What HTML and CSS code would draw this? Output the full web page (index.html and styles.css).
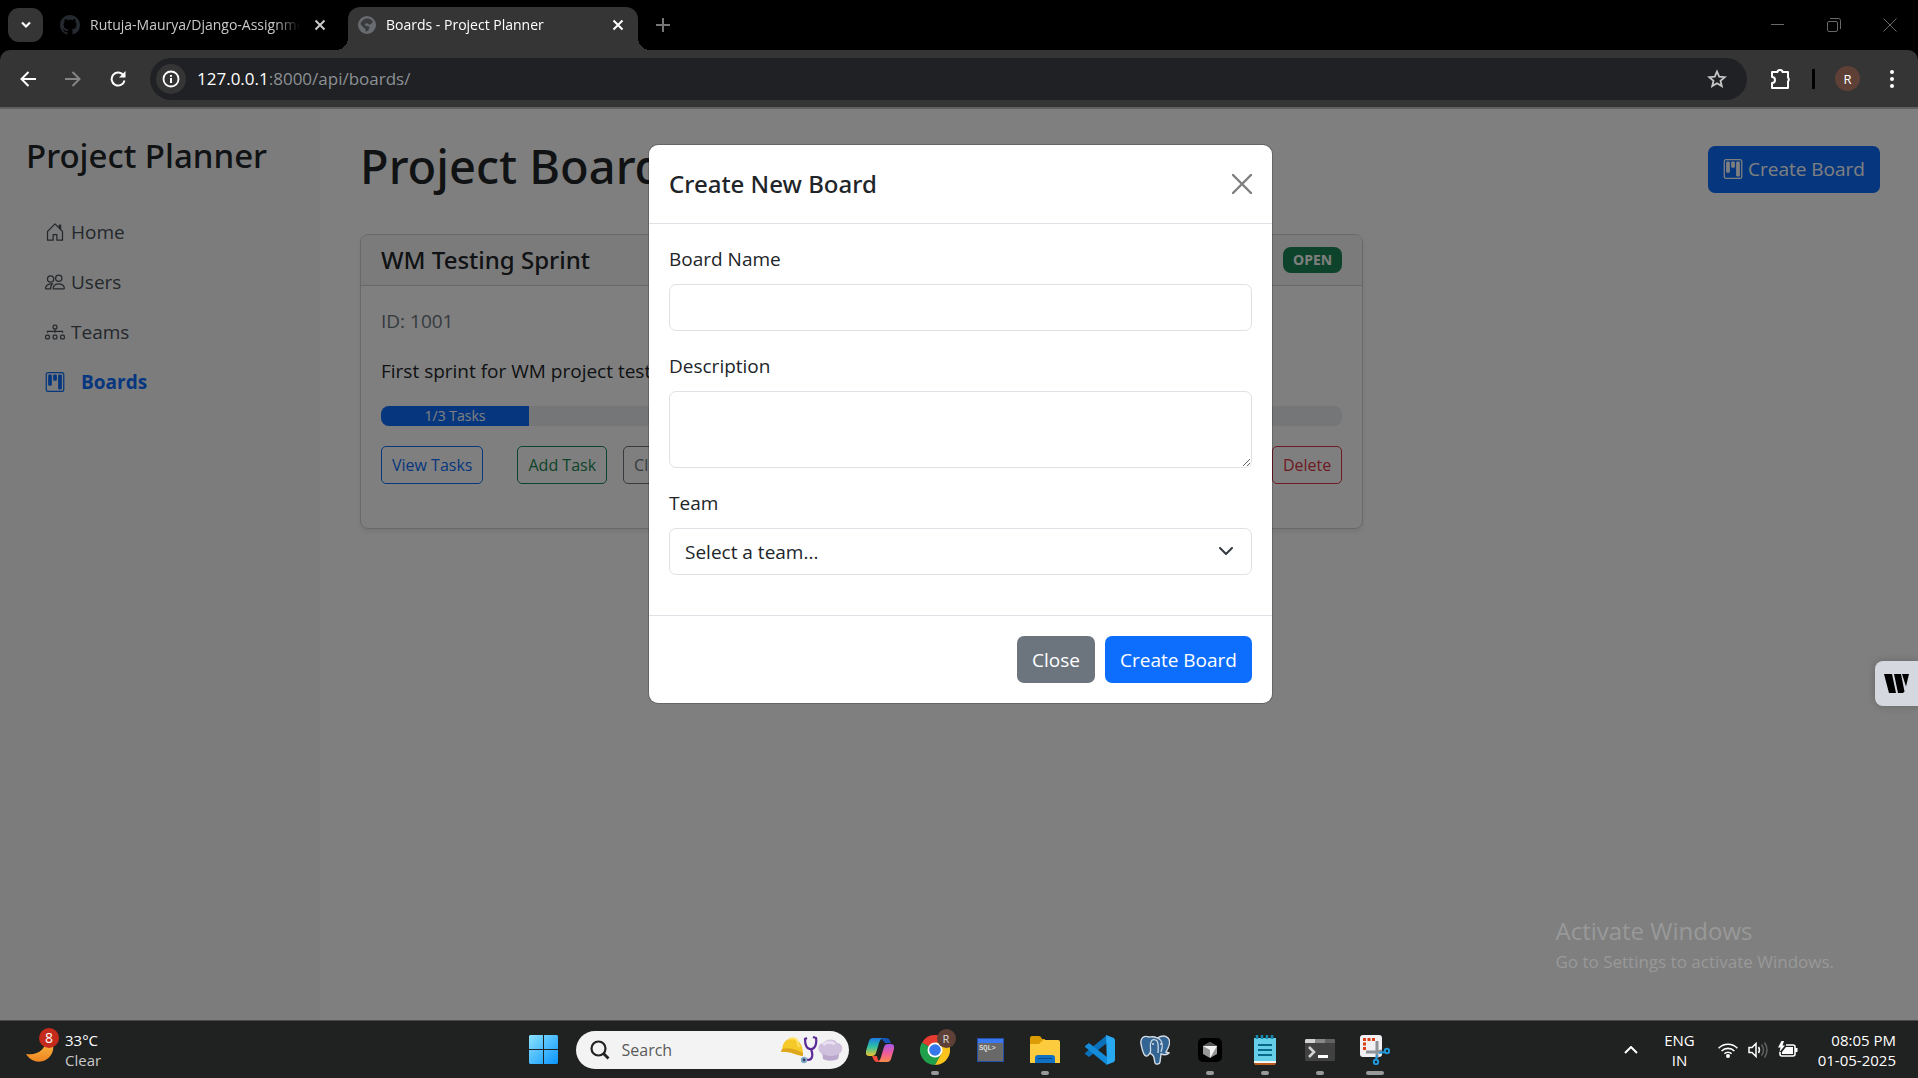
FILE: index.html
```html
<!DOCTYPE html>
<html lang="en">
<head>
<meta charset="utf-8">
<meta name="viewport" content="width=device-width, initial-scale=1">
<title>Boards - Project Planner</title>
<link rel="stylesheet" href="styles.css">
</head>
<body>
<svg class="defs" aria-hidden="true">
  <symbol id="kanban" viewBox="0 0 16 16">
    <path d="M13.5 1a1 1 0 0 1 1 1v12a1 1 0 0 1-1 1h-11a1 1 0 0 1-1-1V2a1 1 0 0 1 1-1zm-11-1a2 2 0 0 0-2 2v12a2 2 0 0 0 2 2h11a2 2 0 0 0 2-2V2a2 2 0 0 0-2-2z"/>
    <path d="M6.500 3a1 1 0 0 1 1-1h1a1 1 0 0 1 1 1v3a1 1 0 0 1-1 1h-1a1 1 0 0 1-1-1zm-4 0a1 1 0 0 1 1-1h1a1 1 0 0 1 1 1v7a1 1 0 0 1-1 1h-1a1 1 0 0 1-1-1zm8 0a1 1 0 0 1 1-1h1a1 1 0 0 1 1 1v10a1 1 0 0 1-1 1h-1a1 1 0 0 1-1-1z"/>
  </symbol>
  <symbol id="cross" viewBox="0 0 12 12"><path d="M1.500 1.500l9 9M10.500 1.500l-9 9" fill="none" stroke="currentColor" stroke-width="2"/></symbol>
</svg>

<header class="tabstrip">
  <button class="tab-search" aria-label="Search tabs"><svg width="12" height="8" viewBox="0 0 12 8"><path d="M2 1.500l4 4 4-4" fill="none" stroke="#fff" stroke-width="2.200"/></svg></button>
  <div class="tab">
    <svg class="favicon" viewBox="0 0 16 16" fill="#24292f"><path d="M8 0C3.580 0 0 3.580 0 8c0 3.540 2.290 6.530 5.470 7.590.4.070.55-.17.55-.38 0-.19-.01-.82-.01-1.490-2.010.37-2.530-.49-2.690-.94-.09-.23-.48-.94-.82-1.130-.28-.15-.68-.52-.01-.53.63-.01 1.080.58 1.230.82.72 1.210 1.870.87 2.330.66.070-.52.28-.87.51-1.070-1.780-.2-3.640-.89-3.640-3.950 0-.87.31-1.590.82-2.150-.08-.2-.36-1.020.08-2.120 0 0 .67-.21 2.200.82.640-.18 1.320-.27 2-.27s1.360.09 2 .27c1.530-1.040 2.200-.82 2.200-.82.440 1.100.160 1.920.08 2.120.51.56.82 1.270.82 2.150 0 3.070-1.870 3.750-3.650 3.950.29.25.54.73.54 1.480 0 1.070-.01 1.930-.01 2.200 0 .21.15.46.55.38A8.010 8.010 0 0 0 16 8c0-4.420-3.580-8-8-8z"/></svg>
    <span class="tab-title">Rutuja-Maurya/Django-Assignment</span>
    <button class="tab-close" aria-label="Close tab"><svg width="12" height="12"><use href="#cross"/></svg></button>
  </div>
  <div class="tab tab-active">
    <svg class="favicon globe" viewBox="0 0 18 18"><circle cx="9" cy="9" r="9" fill="#686b70"/><path d="M9 2.500c3 0 5 1.500 6 3.500-1.500 1-2 3-4 2.500S10 7 8 7.500s-1 2.500 1 2.500 3 1 2 3-2 2.500-3.500 2.500V13L5 11 2.500 8C3 5 6 2.500 9 2.500z" fill="#3a3b3d"/></svg>
    <span class="tab-title">Boards - Project Planner</span>
    <button class="tab-close" aria-label="Close tab"><svg width="12" height="12"><use href="#cross"/></svg></button>
  </div>
  <button class="new-tab" aria-label="New tab"><svg width="14" height="14" viewBox="0 0 14 14"><path d="M7 0v14M0 7h14" stroke="#777" stroke-width="2"/></svg></button>
  <div class="window-buttons">
    <button aria-label="Minimize"><svg width="14" height="14" viewBox="0 0 14 14"><path d="M0 6.500h13" stroke="#696969"/></svg></button>
    <button aria-label="Restore"><svg width="14" height="14" viewBox="0 0 14 14" fill="none" stroke="#696969"><rect x="0.500" y="3.500" width="10" height="10" rx="1.500"/><path d="M3 .5h8.500a2 2 0 0 1 2 2V11"/></svg></button>
    <button aria-label="Close window"><svg width="14" height="14" viewBox="0 0 14 14"><path d="M.5.5l13 13M13.500.5l-13 13" stroke="#696969"/></svg></button>
  </div>
</header>

<nav class="toolbar" aria-label="Browser">
  <button class="tool" aria-label="Back"><svg width="16" height="16" viewBox="0 0 16 16" fill="none" stroke="#fff" stroke-width="2"><path d="M16 8H2M8.500 1L1.500 8l7 7"/></svg></button>
  <button class="tool" aria-label="Forward"><svg width="16" height="16" viewBox="0 0 16 16" fill="none" stroke="#858585" stroke-width="2"><path d="M0 8h14M7.500 1l7 7-7 7"/></svg></button>
  <button class="tool" aria-label="Reload"><svg width="16" height="16" viewBox="0 0 16 16"><path d="M13.600 4.500A6.500 6.500 0 1 0 14.500 9.500" fill="none" stroke="#fff" stroke-width="2"/><path d="M15.500 0v6.500H9z" fill="#fff"/></svg></button>
  <div class="address">
    <button class="site-info" aria-label="Site information"><svg width="18" height="18" viewBox="0 0 18 18"><circle cx="9" cy="9" r="7.500" fill="none" stroke="#fff" stroke-width="1.800"/><path d="M9 8v5M9 5v1.800" stroke="#fff" stroke-width="2"/></svg></button>
    <span class="url"><b>127.0.0.1</b>:8000/api/boards/</span>
    <button class="star" aria-label="Bookmark"><svg width="20" height="20" viewBox="0 0 20 20"><path d="M10 2.500l2.200 5.100 5.500.5-4.200 3.600 1.300 5.400L10 14.200l-4.800 2.900 1.300-5.400L2.300 8.100l5.500-.5z" fill="none" stroke="#c7c7c7" stroke-width="1.800"/></svg></button>
  </div>
  <button class="ext" aria-label="Extensions"><svg width="22" height="22" viewBox="0 0 22 22"><path d="M2 4h5.500a2.500 2 0 0 1 5 0H18v5.500a2 2.500 0 0 1 0 4V20H2v-5a3 3 0 0 0 0-6z" fill="none" stroke="#fff" stroke-width="2" stroke-linejoin="round"/></svg></button>
  <span class="divider"></span>
  <button class="avatar" aria-label="Profile">R</button>
  <button class="menu" aria-label="Menu"><svg width="4" height="18" viewBox="0 0 4 18" fill="#fff"><circle cx="2" cy="2" r="2"/><circle cx="2" cy="9" r="2"/><circle cx="2" cy="16" r="2"/></svg></button>
</nav>

<div class="viewport">
  <div class="page">
    <aside class="sidebar">
      <h3>Project Planner</h3>
      <nav aria-label="Main">
        <a href="#home"><svg viewBox="0 0 16 16"><path d="M8.354 1.146a.5.5 0 0 0-.708 0l-6 6A.5.5 0 0 0 1.500 7.500v7a.5.5 0 0 0 .5.5h4.500a.5.5 0 0 0 .5-.5v-4h2v4a.5.5 0 0 0 .5.5H14a.5.5 0 0 0 .5-.5v-7a.5.5 0 0 0-.146-.354L13 5.793V2.500a.5.5 0 0 0-.5-.5h-1a.5.5 0 0 0-.5.5v1.293zM2.500 14V7.707l5.500-5.500 5.500 5.500V14H10v-4a.5.5 0 0 0-.5-.5h-3a.5.5 0 0 0-.5.5v4z"/></svg>Home</a>
        <a href="#users"><svg viewBox="0 0 16 16"><path d="M15 14s1 0 1-1-1-4-5-4-5 3-5 4 1 1 1 1zm-7.978-1A.261.261 0 0 1 7 12.996c.001-.264.167-1.030.76-1.720C8.312 10.629 9.282 10 11 10c1.717 0 2.687.63 3.240 1.276.593.69.758 1.457.76 1.720l-.008.002A.274.274 0 0 1 15 13zM11 7a2 2 0 1 0 0-4 2 2 0 0 0 0 4zm3-2a3 3 0 1 1-6 0 3 3 0 0 1 6 0zM6.936 9.280a5.880 5.880 0 0 0-1.230-.247A7.350 7.350 0 0 0 5 9c-4 0-5 3-5 4 0 .667.333 1 1 1h4.216A2.238 2.238 0 0 1 5 13c0-1.010.377-2.042 1.090-2.904.243-.294.526-.569.846-.816zM4.920 10A5.493 5.493 0 0 0 4 13H1c0-.26.164-1.030.76-1.724.545-.636 1.492-1.256 3.160-1.275zM1.500 5.500a3 3 0 1 1 6 0 3 3 0 0 1-6 0zm3-2a2 2 0 1 0 0 4 2 2 0 0 0 0-4z"/></svg>Users</a>
        <a href="#teams"><svg viewBox="0 0 16 16" class="outlined"><rect x="6.500" y="2.500" width="3" height="3" rx="1"/><rect x=".5" y="10.500" width="3" height="3" rx="1"/><rect x="6.500" y="10.500" width="3" height="3" rx="1"/><rect x="12.500" y="10.500" width="3" height="3" rx="1"/><path d="M8 5.500v3M2 8.500v-1h12v1"/></svg>Teams</a>
        <a href="#boards" class="current" aria-current="page"><svg><use href="#kanban"/></svg>Boards</a>
      </nav>
    </aside>
    <main>
      <div class="page-head">
        <h1>Project Boards</h1>
        <button class="btn btn-primary"><svg width="20" height="20"><use href="#kanban"/></svg>Create Board</button>
      </div>
      <section class="card">
        <div class="card-head"><h5>WM Testing Sprint</h5><span class="badge">OPEN</span></div>
        <div class="card-body">
          <p class="muted">ID: 1001</p>
          <p>First sprint for WM project testing</p>
          <div class="progress"><div class="progress-bar">1/3 Tasks</div></div>
          <div class="actions">
            <button class="btn-sm blue">View Tasks</button>
            <div class="action-group">
              <button class="btn-sm green">Add Task</button>
              <button class="btn-sm gray">Close</button>
            </div>
            <button class="btn-sm red">Delete</button>
          </div>
        </div>
      </section>
    </main>
  </div>

  <div class="backdrop">
    <div class="modal" role="dialog" aria-modal="true" aria-labelledby="modal-title">
      <div class="modal-head">
        <h5 id="modal-title">Create New Board</h5>
        <button class="modal-x" aria-label="Close"><svg width="20" height="20" viewBox="0 0 20 20"><path d="M1 1l18 18M19 1L1 19" stroke="currentColor" stroke-width="2.400" stroke-linecap="round"/></svg></button>
      </div>
      <form class="modal-body">
        <div class="field"><label for="name">Board Name</label><input id="name" type="text"></div>
        <div class="field"><label for="description">Description</label><textarea id="description"></textarea></div>
        <div class="field"><label for="team">Team</label>
          <div class="select-wrap">
            <select id="team"><option>Select a team...</option></select>
            <svg width="14" height="9" viewBox="0 0 14 9"><path d="M1 1l6 6 6-6" fill="none" stroke="#343a40" stroke-width="2" stroke-linecap="round" stroke-linejoin="round"/></svg>
          </div>
        </div>
      </form>
      <div class="modal-foot">
        <button class="btn btn-secondary">Close</button>
        <button class="btn btn-primary">Create Board</button>
      </div>
    </div>
  </div>

  <button class="widget" aria-label="Writing assistant"><svg width="25" height="19" viewBox="0 0 25 19"><path d="M0 0h8l4 19H5zM10 0h7l3.500 17.500L19 19h-5zM18 0h7l-3 12.500z"/></svg></button>
  <div class="watermark"><p>Activate Windows</p><small>Go to Settings to activate Windows.</small></div>
</div>

<footer class="taskbar">
  <div class="weather">
    <div class="moon"><svg width="30" height="30" viewBox="0 0 30 30"><defs><linearGradient id="mg" x1="0" y1="0" x2="0" y2="1"><stop offset="0" stop-color="#fbc64c"/><stop offset="1" stop-color="#ee8420"/></linearGradient></defs><path d="M21 2c7 4 8 12 4 18-6 9-19 9-25-1 12 2 20-5 21-17z" fill="url(#mg)"/></svg><span>8</span></div>
    <div class="two-line"><span>33°C</span><span class="dim">Clear</span></div>
  </div>
  <div class="apps">
    <button class="app" aria-label="Start"><svg width="29" height="29" viewBox="0 0 29 29"><defs><linearGradient id="wg" x1="0" y1="0" x2="1" y2="1"><stop offset="0" stop-color="#8be2ff"/><stop offset="1" stop-color="#0a95fb"/></linearGradient></defs><path d="M1 0h13v14H0V1zM15 0h13l1 1v13H15zM0 15h14v14H1l-1-1zM15 15h14v13l-1 1H15z" fill="url(#wg)"/></svg></button>
    <div class="search">
      <svg width="20" height="20" viewBox="0 0 20 20" fill="none" stroke="#222" stroke-width="2.200"><circle cx="8.500" cy="8.500" r="7"/><path d="M13.500 13.500l5 5" stroke-width="2.800"/></svg>
      <input type="text" placeholder="Search" aria-label="Search">
      <svg width="62" height="28" viewBox="0 0 62 28"><path d="M1 14C2 4 8 1 14 3c5 2 7 6 8 13l-1 4c-7-1-13-5-21-4z" fill="#f5c927"/><path d="M1 13c8-2 15 1 21 4v3c-7-1-13-5-22-4z" fill="#dda51d"/><path d="M8 3q5-2 8 1l2 7" fill="none" stroke="#ffe26e" stroke-width="2"/><path d="M26 2l-2 1c0 7 2 10 6 10s6-5 5-11l-3-1M30 13c2 5 2 11-3 11l-3-1" fill="none" stroke="#5b2a98" stroke-width="2.200"/><circle cx="23" cy="24" r="3.200" fill="#87aac9"/><circle cx="23" cy="24" r="1.400" fill="#29405d"/><path d="M41 18c-5-3-5-10 1-11 3-4 12-5 14 0 6 0 7 8 2 11l-1 5q-8 3-15 0z" fill="#cfc0dd"/><path d="M42 18q8 4 16 0l-1 5q-8 3-15 0z" fill="#b9a8cc"/><path d="M42 9q5-5 12-1" fill="none" stroke="#e8def0" stroke-width="3"/></svg>
    </div>
    <button class="app" aria-label="Copilot"><svg width="28" height="26" viewBox="0 0 28 26"><defs><linearGradient id="c1" x1="0" y1="0" x2="0" y2="1"><stop offset="0" stop-color="#1c7be8"/><stop offset=".5" stop-color="#2fc3a0"/><stop offset="1" stop-color="#f3c32c"/></linearGradient><linearGradient id="c2" x1="0" y1="0" x2="0" y2="1"><stop offset="0" stop-color="#a85ae8"/><stop offset=".5" stop-color="#ee5a9b"/><stop offset="1" stop-color="#fb8b4b"/></linearGradient></defs><path d="M19 1h-4l4 5h6l-2-4q-1-1-4-1z" fill="#1556b8"/><path d="M7 1h10q-3 1-4 5l-3 10q-1 3-4 3H3q-4 0-3-5L3 4q1-3 4-3z" fill="url(#c1)"/><path d="M21 25H11q3-1 4-5l3-10q1-3 4-3h3q4 0 3 5l-3 10q-1 3-4 3z" fill="url(#c2)"/><path d="M6 19h5q1 6 4 6H11q-3 0-5-6z" fill="#ee4b3d"/></svg></button>
    <button class="app running chrome" aria-label="Chrome"><svg width="30" height="30" viewBox="0 0 30 30"><path d="M15 15L2 7.500A15 15 0 0 1 28 7.500H15z" fill="#e53b30"/><path d="M15 15L2 7.500A15 15 0 0 0 15 30l6.500-11z" fill="#21a04b"/><path d="M15 30A15 15 0 0 0 28 7.500H15l6.500 11z" fill="#fcc31d"/><circle cx="15" cy="15" r="7.500" fill="#fff"/><circle cx="15" cy="15" r="5.800" fill="#3478ea"/></svg><span>R</span></button>
    <button class="app" aria-label="SQL command line"><svg width="27" height="24" viewBox="0 0 27 24"><rect x=".5" y=".5" width="26" height="23" fill="#696969" stroke="#2550a8"/><path d="M1 1h25v4H1z" fill="#3a78ef"/><text x="2" y="12" font-family="Liberation Mono" font-size="7" fill="#fff">SQL&gt;</text></svg></button>
    <button class="app running" aria-label="File Explorer"><svg width="30" height="27" viewBox="0 0 30 27"><path d="M0 2q0-2 2-2h7q2 0 3 3h3v6H0z" fill="#dc9c05"/><path d="M0 8h9l4-4h15q2 0 2 2v21H0z" fill="#fdcc3e"/><path d="M5 27v-5q0-3 3-3h14q3 0 3 3v5z" fill="#0f70c4"/><path d="M8 22.500h14" stroke="#074b8c"/></svg></button>
    <button class="app" aria-label="Visual Studio Code"><svg width="30" height="30" viewBox="0 0 30 30"><path d="M22 8L4 22l-4-3v-1L22 0z" fill="#0a70ba"/><path d="M22 22L4 8l-4 3v1l22 18z" fill="#138bd8"/><path d="M21 0l8 3 1 2v20l-1 2-8 3 1-1z" fill="#29a8f2"/></svg></button>
    <button class="app" aria-label="PostgreSQL"><svg width="30" height="30" viewBox="0 0 30 30"><path d="M9 2C4 0 0 3 1 9c1 5 3 12 5 12 2 1 3-2 4-3 2 2 4 2 4 5l1 5c1 2 5 1 5-1l1-8c3 1 6 1 8-1l-3-1c3-5 5-11 2-14-4-4-9-1-11 0-3-2-6-1-8-1z" fill="#326593" stroke="#d2dae2" stroke-width="1.400"/><path d="M10 18c2-3-1-7 1-11 1-3 4-3 6-1 2 3 1 8 1 12M18 3c5 3 5 9 3 14M12 9h2m6 0h2" fill="none" stroke="#d2dae2" stroke-width="1.300"/></svg></button>
    <button class="app running" aria-label="Cursor"><svg width="24" height="24" viewBox="0 0 24 24"><rect width="24" height="24" rx="5" fill="#000"/><path d="M12 4l7 4v8l-7 4-7-4V8z" fill="#969696"/><path d="M5 8h14l-7 12v-8z" fill="#f2f2f2"/><path d="M12 4l7 4H5z" fill="#555"/></svg></button>
    <button class="app running" aria-label="Notepad"><svg width="22" height="30" viewBox="0 0 22 30"><path d="M0 3h22v25H0z" fill="#65cfe8"/><path d="M0 26h22v2H0z" fill="#f4f4f4"/><path d="M0 28h22l-1 2H1z" fill="#b95b1d"/><path d="M4 10h14M4 15h14M4 20h14" stroke="#08688a" stroke-width="2"/><path d="M3 0v4M8 0v4M13 0v4M18 0v4" stroke="#168bb0" stroke-width="2.500"/></svg></button>
    <button class="app running" aria-label="Terminal"><svg width="30" height="22" viewBox="0 0 30 22"><rect width="30" height="22" rx="1" fill="#414141"/><path d="M1 0h9v4H0V1z" fill="#d2d2d2"/><path d="M10 0h10v4H10z" fill="#888"/><path d="M20 0h9l1 1v3H20z" fill="#626262"/><path d="M4 8l5 5-5 5" fill="none" stroke="#d2d2d2" stroke-width="2.600"/><path d="M13 17.500h10" stroke="#fff" stroke-width="3"/></svg></button>
    <button class="app running wide" aria-label="Snipping Tool"><svg width="30" height="30" viewBox="0 0 30 30"><rect y="0" width="22" height="22" rx="3" fill="#f1f1f4"/><path d="M15 4.500H4.500V16" fill="none" stroke="#dd3d12" stroke-width="3" stroke-dasharray="3 1.500"/><path d="M17 6v11H6M17 17l5-1M17 17v6" fill="none" stroke="#8d9298" stroke-width="3"/><path d="M19 18l6-1M17 20l-1 5" stroke="#2099db" stroke-width="2"/><circle cx="27" cy="16" r="2.200" fill="none" stroke="#2099db" stroke-width="2"/><circle cx="16" cy="27" r="2.200" fill="none" stroke="#2099db" stroke-width="2"/></svg></button>
  </div>
  <div class="tray">
    <svg width="14" height="8" viewBox="0 0 14 8"><path d="M1 7l6-6 6 6" fill="none" stroke="#fff" stroke-width="2"/></svg>
    <div class="two-line lang"><span>ENG</span><span>IN</span></div>
    <div class="status">
      <svg width="20" height="16" viewBox="0 0 20 16" fill="none" stroke="#fff" stroke-width="1.600"><path d="M.6 6.200a13 13 0 0 1 18.800 0M3.600 9a9 9 0 0 1 12.800 0M6.400 11.800a5 5 0 0 1 7.200 0"/><circle cx="10" cy="14" r="1.200" fill="#fff"/></svg>
      <svg width="20" height="18" viewBox="0 0 20 18" fill="none" stroke="#fff" stroke-width="1.500"><path d="M1 6.500h3L8 2.500v13l-4-4H1zM10.500 6q2 3 0 6"/><path d="M13.500 3.500q4 5.500 0 11M16.500 1.500q5 7.500 0 15" stroke="#626262"/></svg>
      <svg width="20" height="18" viewBox="0 0 20 18"><path d="M8 4h7q2 0 2 2v7q0 2-2 2H4q-2 0-2-2v-2" fill="none" stroke="#fff" stroke-width="1.600"/><path d="M8 6h7v7H4v-2z" fill="#fff"/><path d="M17 7h2.500v4H17zM3.500 0L0 6.500h2.500L1.500 11 7 4.500H4.500L6 0z" fill="#fff"/></svg>
    </div>
    <div class="two-line clock"><span>08:05 PM</span><span>01-05-2025</span></div>
  </div>
</footer>
</body>
</html>
```
FILE: styles.css
```css
* { box-sizing: border-box; }

body {
  margin: 0;
  min-height: 100vh;
  display: flex;
  flex-direction: column;
  background: #000;
  color: #212529;
  font-family: "Open Sans", "Noto Sans", sans-serif;
  font-size: 19px;
  line-height: 30px;
}

button, input, select, textarea { font: inherit; color: inherit; }
button { border: 0; padding: 0; background: none; display: inline-flex; align-items: center; justify-content: center; }
h1, h3, h5, p { margin: 0; }
h1, h3, h5 { font-family: "Noto Sans", "Open Sans", sans-serif; font-weight: 500; }
svg { flex: none; }
.sidebar svg, .btn svg { fill: currentColor; }
.defs { display: none; }

/* Browser tabs */
.tabstrip { display: flex; height: 50px; padding-left: 8px; color: #fff; font-size: 14px; }
.tab-search { width: 35px; height: 34px; margin-top: 8px; border-radius: 11px; background: #353535; }
.tab { display: flex; align-items: center; width: 305px; padding: 0 18px 0 17px; color: #c9c9c9; gap: 10px; }
.tab-title { flex: 1; overflow: hidden; white-space: nowrap; line-height: 24px; mask-image: linear-gradient(to right, #000 88%, transparent); }
.favicon { width: 20px; height: 20px; }
.tab-close { width: 20px; height: 20px; }
.tab-active { position: relative; width: 290px; margin-top: 7px; padding: 0 10px 7px; border-radius: 12px 12px 0 0; background: #353535; color: #fff; }
.tab-active::before, .tab-active::after { content: ""; position: absolute; bottom: 0; width: 12px; height: 12px; }
.tab-active::before { right: 100%; background: radial-gradient(circle at 0 0, transparent 12px, #353535 12px); }
.tab-active::after { left: 100%; background: radial-gradient(circle at 100% 0, transparent 12px, #353535 12px); }
.globe { width: 18px; height: 18px; }
.new-tab { width: 50px; }
.window-buttons { display: flex; margin-left: auto; }
.window-buttons button { width: 56px; }

/* Browser toolbar */
.toolbar { display: flex; align-items: center; height: 57px; padding: 0 14px 0 5px; border-radius: 10px 10px 0 0; background: #353535; }
.tool { width: 45px; height: 40px; }
.address { display: flex; flex: 1; align-items: center; height: 42px; margin: 0 23px 0 10px; padding: 0 20px 0 6px; border-radius: 21px; background: #202124; }
.site-info { width: 30px; height: 30px; border-radius: 50%; background: #353535; }
.url { flex: 1; padding-left: 11px; color: #8d9196; font-size: 17px; }
.url b { color: #fff; font-weight: 400; }
.divider { width: 3px; height: 20px; margin: 0 20px; background: #000; }
.avatar { width: 25px; height: 25px; border-radius: 50%; background: #5f4037; color: #fff; font-size: 13px; }
.menu { width: 24px; margin-left: 20px; }

/* Application page */
.viewport { position: relative; display: flex; flex: 1; border-top: 2px solid #606060; background: #fff; }
.page { display: flex; flex: 1; }
.sidebar { width: 320px; padding: 26px; background: #f8f9fa; }
.sidebar h3 { margin-bottom: 30px; font-size: 33px; line-height: 42px; white-space: nowrap; }
.sidebar nav { display: flex; flex-direction: column; padding-left: 19px; }
.sidebar a { display: flex; align-items: center; gap: 6px; height: 50px; color: #495057; text-decoration: none; }
.sidebar a svg { width: 20px; height: 20px; }
.sidebar .current { gap: 16px; color: #0d6efd; font-weight: 700; }
.sidebar .outlined { fill: none; stroke: currentColor; }
main { flex: 1; padding: 30px 38px 30px 40px; }
.page-head { display: flex; align-items: center; justify-content: space-between; margin-bottom: 35px; }
h1 { padding-bottom: 6px; font-size: 47px; line-height: 54px; }
h5 { font-size: 24px; }

.btn { gap: 5px; height: 47px; padding: 0 15px; border-radius: 7px; color: #fff; white-space: nowrap; }
.btn-primary { background: #0d6efd; }
.btn-secondary { background: #6c757d; }

.card { width: 66%; border: 1px solid #d2d2d2; border-radius: 8px; box-shadow: 0 3px 5px rgba(0, 0, 0, .08); }
.card-head { display: flex; align-items: center; justify-content: space-between; padding: 10px 20px; border-bottom: 1px solid #d2d2d2; background: #f7f7f7; border-radius: 7px 7px 0 0; }
.badge { padding: 0 10px; border-radius: 8px; background: #198754; color: #fff; font-size: 14px; font-weight: 700; line-height: 26px; }
.card-body { display: flex; flex-direction: column; gap: 20px; padding: 20px 20px 44px; }
.muted { color: #6c757d; }
.progress { height: 20px; border-radius: 8px; background: #e9ecef; overflow: hidden; }
.progress-bar { width: 148px; height: 20px; background: #0d6efd; color: #fff; font-size: 14px; line-height: 20px; text-align: center; }
.actions { display: flex; gap: 34px; }
.action-group { display: flex; gap: 16px; }
.btn-sm { height: 38px; padding: 0 10px; border: 1px solid; border-radius: 5px; font-size: 16px; white-space: nowrap; }
.blue { color: #0d6efd; }
.green { color: #198754; }
.gray { color: #6c757d; }
.red { margin-left: auto; color: #dc3545; }

/* Create-board dialog */
.backdrop { position: absolute; inset: 0; display: flex; align-items: flex-start; justify-content: center; padding: 36px 0 0 3px; background: rgba(0, 0, 0, .5); }
.modal { width: 623px; border-radius: 9px; background: #fff; box-shadow: 0 0 0 1px rgba(0, 0, 0, .2); }
.modal-head { display: flex; align-items: center; justify-content: space-between; height: 79px; padding: 0 20px; border-bottom: 1px solid #dee2e6; }
.modal-x { color: #7f7f7f; }
.modal-body { display: flex; flex-direction: column; gap: 20px; padding: 20px 20px 40px; }
.field { display: flex; flex-direction: column; gap: 10px; }
.field input, .field textarea, .field select { width: 100%; height: 47px; padding: 0 15px; border: 1px solid #dee2e6; border-radius: 7px; background: #fff; }
.field textarea { height: 77px; padding: 8px 15px; resize: vertical; }
.select-wrap { display: grid; align-items: center; }
.select-wrap > * { grid-area: 1 / 1; }
.select-wrap select { appearance: none; }
.select-wrap svg { justify-self: end; margin-right: 19px; pointer-events: none; }
.modal-foot { display: flex; justify-content: flex-end; gap: 10px; padding: 20px; border-top: 1px solid #dee2e6; }

.widget { position: absolute; right: 0; top: 552px; width: 43px; height: 45px; border-radius: 8px 0 0 8px; background: #d5d8df; color: #000; box-shadow: 0 0 8px rgba(0, 0, 0, .2); }
.watermark { position: absolute; right: 84px; bottom: 44px; color: #999; }
.watermark p { font-size: 24px; line-height: 34px; }
.watermark small { display: block; font-size: 17px; line-height: 28px; }

/* Windows taskbar */
.taskbar { display: grid; grid-template-columns: 1fr auto 1fr; height: 58px; border-top: 1px solid #484848; background: #202121; color: #fff; font-size: 15px; }
.weather { display: flex; align-items: center; gap: 9px; padding-left: 26px; }
.moon { position: relative; display: flex; }
.moon span { position: absolute; top: -7px; right: -3px; width: 20px; height: 20px; border-radius: 50%; background: #c42b1c; font-size: 14px; line-height: 20px; text-align: center; }
.two-line { display: flex; flex-direction: column; line-height: 20px; }
.dim { color: #c8c8c8; }
.apps { display: flex; align-items: center; }
.app { position: relative; width: 55px; height: 57px; }
.running::after { content: ""; position: absolute; bottom: 3px; width: 8px; height: 4px; border-radius: 2px; background: #999; }
.wide::after { width: 18px; }
.chrome span { position: absolute; top: 8px; right: 7px; width: 19px; height: 19px; border-radius: 50%; background: #5f4037; color: #ddd; font-size: 11px; line-height: 19px; }
.search { display: flex; align-items: center; gap: 12px; width: 273px; height: 38px; margin: 0 4px 0 5px; padding: 0 6px 0 14px; border-radius: 19px; background: #f3f3f3; }
.search input { flex: 1; min-width: 0; padding: 0; border: 0; background: none; font-size: 16px; outline: 0; }
.search input::placeholder { color: #5a5a5a; }
.tray { display: flex; align-items: center; justify-content: flex-end; padding-right: 22px; }
.lang { margin: 0 23px 0 26px; text-align: center; }
.status { display: flex; align-items: center; gap: 10px; margin-right: 20px; }
.clock { text-align: right; }
```
